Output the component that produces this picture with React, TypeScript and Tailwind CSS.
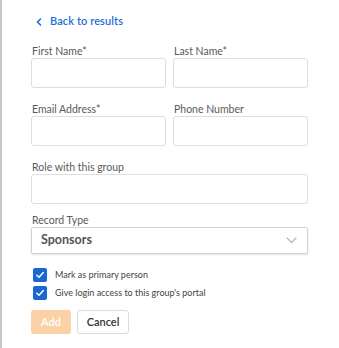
import React from "react";

function Field({ label, className = "" }: { label: string; className?: string }) {
  return (
    <div className={`flex flex-col ${className}`}>
      <label className="text-[10.5px] leading-[13px] text-[#5a5a5a] pl-[1px]">{label}</label>
      <div className="h-[30px] rounded-[3px] border border-[#dedede] bg-white" />
    </div>
  );
}

function Check({ label }: { label: string }) {
  return (
    <div className="flex items-center h-[14px]">
      <div className="ml-[2px] w-[14px] h-[14px] rounded-[2px] bg-[#1a67d2] flex items-center justify-center">
        <svg width="10" height="10" viewBox="0 0 10 10" fill="none">
          <path d="M1.8 5.2 L4 7.3 L8.3 2.6" stroke="white" strokeWidth="1.5" strokeLinecap="round" strokeLinejoin="round" />
        </svg>
      </div>
      <span className="ml-[8px] text-[9px] text-[#444]">{label}</span>
    </div>
  );
}

export default function App() {
  return (
    <div
      className="relative w-[339px] h-[348px] bg-white border-l-[2px] border-[#c7c7c7] overflow-hidden"
      style={{ fontFamily: "Lato, 'Open Sans', sans-serif" }}
    >
      <div className="absolute left-[-2px] top-[1px] w-[2px] h-[22px] bg-[#1a5cb8]" />
      <div className="absolute left-[-2px] top-[47px] w-[2px] h-[18px] bg-[#c0413b]" />

      <div className="pl-[29px] pr-[31px] pt-[15px] flex flex-col">
        <div className="flex items-center h-[13px] pl-[5px] text-[#1c6fd6]">
          <svg width="6" height="8" viewBox="0 0 6 8" fill="none">
            <path d="M4.5 1 L1.5 4 L4.5 7" stroke="currentColor" strokeWidth="1.6" strokeLinecap="round" strokeLinejoin="round" />
          </svg>
          <span className="ml-[8px] text-[11px] font-semibold tracking-[0.1px]">Back to results</span>
        </div>

        <div className="grid grid-cols-2 gap-x-[7px] mt-[17px]">
          <Field label="First Name*" />
          <Field label="Last Name*" />
        </div>
        <div className="grid grid-cols-2 gap-x-[7px] mt-[15px]">
          <Field label="Email Address*" />
          <Field label="Phone Number" />
        </div>
        <Field label="Role with this group" className="mt-[15px]" />

        <div className="flex flex-col mt-[10px]">
          <label className="text-[10.5px] leading-[13px] text-[#5a5a5a] pl-[1px]">Record Type</label>
          <div className="h-[27px] rounded-[2px] border border-[#d4d4d4] bg-white shadow-[0_1px_2px_rgba(0,0,0,0.12)] flex items-center justify-between pl-[9px] pr-[10px]">
            <span className="text-[12.5px] font-bold text-[#555]">Sponsors</span>
            <svg width="11" height="7" viewBox="0 0 11 7" fill="none">
              <path d="M1 1 L5.5 5.5 L10 1" stroke="#b5b5b5" strokeWidth="1.2" strokeLinecap="round" strokeLinejoin="round" />
            </svg>
          </div>
        </div>

        <div className="flex flex-col gap-[4px] mt-[14px]">
          <Check label="Mark as primary person" />
          <Check label="Give login access to this group's portal" />
        </div>

        <div className="flex gap-[6px] mt-[10px]">
          <button className="w-[40px] h-[24px] rounded-[3px] bg-[#fdd1a8] text-white text-[11px] font-semibold">Add</button>
          <button className="w-[52px] h-[24px] rounded-[3px] border border-[#dcdcdc] bg-white text-[#333] text-[11px] font-semibold">Cancel</button>
        </div>
      </div>
    </div>
  );
}
